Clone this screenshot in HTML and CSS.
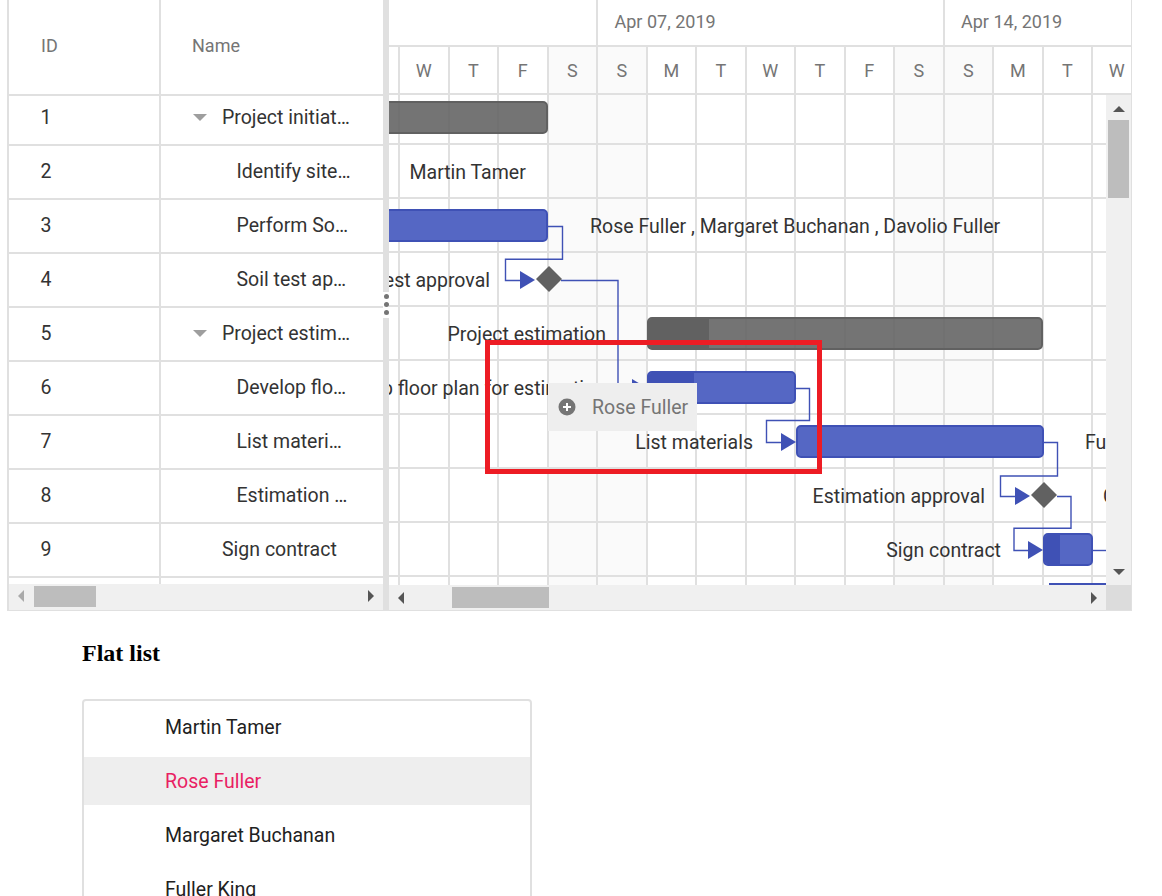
FILE: index.html
```html
<!DOCTYPE html>
<html lang="en">
<head>
    <meta charset="UTF-8">
    <title>Gantt and flat list</title>
    <link rel="stylesheet" href="styles.css">
</head>
<body>
<div class="page">

    <div class="gantt">
        <div class="grid-pane">
            <div class="grid-head">
                <div class="col-id">ID</div>
                <div class="col-name">Name</div>
            </div>
            <div class="grid-rows">
                <div class="grid-row first">
                    <div class="col-id">1</div>
                    <div class="col-name"><span class="expander"></span><span class="cell-text">Project initiation</span></div>
                </div>
                <div class="grid-row">
                    <div class="col-id">2</div>
                    <div class="col-name child"><span class="cell-text">Identify site location</span></div>
                </div>
                <div class="grid-row">
                    <div class="col-id">3</div>
                    <div class="col-name child"><span class="cell-text">Perform Soil test</span></div>
                </div>
                <div class="grid-row">
                    <div class="col-id">4</div>
                    <div class="col-name child"><span class="cell-text">Soil test approval</span></div>
                </div>
                <div class="grid-row">
                    <div class="col-id">5</div>
                    <div class="col-name"><span class="expander"></span><span class="cell-text">Project estimation</span></div>
                </div>
                <div class="grid-row">
                    <div class="col-id">6</div>
                    <div class="col-name child"><span class="cell-text">Develop floor plan for estimation</span></div>
                </div>
                <div class="grid-row">
                    <div class="col-id">7</div>
                    <div class="col-name child"><span class="cell-text">List materials</span></div>
                </div>
                <div class="grid-row">
                    <div class="col-id">8</div>
                    <div class="col-name child"><span class="cell-text">Estimation approval</span></div>
                </div>
                <div class="grid-row">
                    <div class="col-id">9</div>
                    <div class="col-name leaf"><span class="cell-text">Sign contract</span></div>
                </div>
                <div class="grid-row">
                    <div class="col-id"></div>
                    <div class="col-name"></div>
                </div>
            </div>
            <div class="hbar hbar-left">
                <span class="arrow-left disabled"></span>
                <div class="thumb"></div>
                <span class="arrow-right"></span>
            </div>
        </div>

        <div class="splitter">
            <div class="splitter-line top"></div>
            <div class="splitter-dots"><i></i><i></i><i></i></div>
            <div class="splitter-line"></div>
        </div>

        <div class="chart-pane">
            <div class="time-head">
                <div class="tier-weeks">
                    <div class="week week-a"></div>
                    <div class="week week-b">Apr 07, 2019</div>
                    <div class="week week-c">Apr 14, 2019</div>
                </div>
                <div class="tier-days">
                    <div class="day stub"></div>
                    <div class="day">W</div>
                    <div class="day">T</div>
                    <div class="day">F</div>
                    <div class="day off">S</div>
                    <div class="day off">S</div>
                    <div class="day">M</div>
                    <div class="day">T</div>
                    <div class="day">W</div>
                    <div class="day">T</div>
                    <div class="day">F</div>
                    <div class="day off">S</div>
                    <div class="day off">S</div>
                    <div class="day">M</div>
                    <div class="day">T</div>
                    <div class="day">W</div>
                </div>
            </div>

            <div class="chart-mid">
                <div class="timeline">
                    <div class="col-lines">
                        <div class="vcol stub"></div>
                        <div class="vcol"></div>
                        <div class="vcol"></div>
                        <div class="vcol"></div>
                        <div class="vcol off"></div>
                        <div class="vcol off"></div>
                        <div class="vcol"></div>
                        <div class="vcol"></div>
                        <div class="vcol"></div>
                        <div class="vcol"></div>
                        <div class="vcol"></div>
                        <div class="vcol off"></div>
                        <div class="vcol off"></div>
                        <div class="vcol"></div>
                        <div class="vcol"></div>
                        <div class="vcol"></div>
                    </div>
                    <div class="row-lines">
                        <div class="hrow first"></div>
                        <div class="hrow"></div>
                        <div class="hrow"></div>
                        <div class="hrow"></div>
                        <div class="hrow"></div>
                        <div class="hrow"></div>
                        <div class="hrow"></div>
                        <div class="hrow"></div>
                        <div class="hrow"></div>
                    </div>

                    <div class="bar summary bar-1"></div>
                    <div class="bar task bar-3"></div>
                    <div class="bar summary bar-5"><div class="progress"></div></div>
                    <div class="bar task bar-6"><div class="progress"></div></div>
                    <div class="bar task bar-7"></div>
                    <div class="bar task bar-9"><div class="progress"></div></div>

                    <span class="label label-2">Martin Tamer</span>
                    <span class="label label-3">Rose Fuller , Margaret Buchanan , Davolio Fuller</span>
                    <span class="label label-4">Soil test approval</span>
                    <span class="label label-5">Project estimation</span>
                    <span class="label label-6">Develop floor plan for estimation</span>
                    <span class="label label-7">List materials</span>
                    <span class="label label-7b">Fuller King</span>
                    <span class="label label-8">Estimation approval</span>
                    <span class="label label-8b">C</span>
                    <span class="label label-9">Sign contract</span>

                    <svg class="links" width="717" height="490" viewBox="0 0 717 490">
                        <g transform="translate(-389 -95)">
                            <path d="M548 226.5H562.5V259.3H505.5V280.5H520"/>
                            <path d="M561 280.5H618V388H632"/>
                            <path d="M796 388.5H809.5V420.5H766.5V442.5H781"/>
                            <path d="M1044 442.5H1057.5V476H1000.5V496.5H1015"/>
                            <path d="M1057 496.5H1071V528.3H1014V550.5H1028"/>
                            <path d="M1093 550.5H1106"/>
                            <path class="thick" d="M1049 584H1106"/>
                            <polygon points="520,271 535,280 520,289"/>
                            <polygon points="632,379 647,388 632,397"/>
                            <polygon points="781,433 796,442 781,451"/>
                            <polygon points="1015,487 1030,496 1015,505"/>
                            <polygon points="1028,541 1043,550 1028,559"/>
                            <polygon class="milestone" points="549,266 562,279 549,292 536,279"/>
                            <polygon class="milestone" points="1044,482 1057,495 1044,508 1031,495"/>
                        </g>
                    </svg>
                </div>
                <div class="vbar">
                    <span class="arrow-up"></span>
                    <div class="vthumb"></div>
                    <span class="arrow-down"></span>
                </div>
            </div>

            <div class="hbar-row">
                <div class="hbar hbar-chart">
                    <span class="arrow-left"></span>
                    <div class="thumb"></div>
                    <span class="arrow-right"></span>
                </div>
                <div class="corner"></div>
            </div>
        </div>

        <div class="drag-tip">
            <svg class="tip-icon" width="18" height="18" viewBox="0 0 18 18">
                <circle cx="9" cy="9" r="8.5" fill="#757575"/>
                <path d="M9 5v8M5 9h8" stroke="#fff" stroke-width="2"/>
            </svg>
            <span>Rose Fuller</span>
        </div>
        <div class="red-box"></div>
    </div>

    <h2 class="list-title">Flat list</h2>
    <ul class="flat-list">
        <li>Martin Tamer</li>
        <li class="selected">Rose Fuller</li>
        <li>Margaret Buchanan</li>
        <li>Fuller King</li>
    </ul>

</div>
</body>
</html>
```

FILE: styles.css
```css
html, body {
    margin: 0;
    padding: 0;
    background: #fff;
}

.page {
    height: 896px;
    overflow: hidden;
}

.gantt {
    position: relative;
    display: flex;
    box-sizing: border-box;
    width: 1125px;
    height: 611px;
    margin-left: 7px;
    border-left: 2px solid #e0e0e0;
    border-bottom: 1px solid #e0e0e0;
    border-right: 1px solid #e0e0e0;
    font-family: Roboto, sans-serif;
    font-size: 19.5px;
    color: #333;
}

/* left grid */
.grid-pane {
    display: flex;
    flex-direction: column;
    width: 374px;
    height: 610px;
}

.grid-head {
    display: flex;
    flex: none;
    box-sizing: border-box;
    height: 96px;
    border-bottom: 2px solid #e0e0e0;
    color: #757575;
    font-size: 18px;
}

.grid-head .col-id, .grid-head .col-name {
    padding-bottom: 4px;
}

.grid-rows {
    flex: 1;
    overflow: hidden;
}

.grid-row {
    display: flex;
    box-sizing: border-box;
    height: 54px;
    border-bottom: 2px solid #e0e0e0;
}

.grid-row.first {
    height: 50px;
}

.col-id, .col-name {
    display: flex;
    align-items: center;
    box-sizing: border-box;
    padding-bottom: 2px;
}

.col-id {
    flex: none;
    width: 152px;
    padding-left: 32px;
    border-right: 2px solid #e0e0e0;
}

.grid-row .col-id {
    padding-left: 31.5px;
}

.col-name {
    flex: 1;
    min-width: 0;
    padding-left: 31px;
    padding-right: 31px;
}

.grid-row.first .col-id, .grid-row.first .col-name {
    padding-bottom: 6px;
}

.col-name.child {
    padding-left: 75.5px;
}

.col-name.leaf {
    padding-left: 61px;
}

.cell-text {
    overflow: hidden;
    white-space: nowrap;
    text-overflow: ellipsis;
}

.expander {
    flex: none;
    width: 0;
    height: 0;
    margin: 0 15px 0 1px;
    border-top: 7px solid #9e9e9e;
    border-left: 7px solid transparent;
    border-right: 7px solid transparent;
}

/* scrollbars */
.hbar {
    display: flex;
    align-items: center;
    flex: none;
    background: #f0f0f0;
}

.hbar-left {
    box-sizing: border-box;
    height: 26px;
    padding: 0 9px 2px;
}

.hbar-left .thumb {
    width: 62px;
    margin-left: 10px;
}

.hbar-chart {
    flex: 1;
    height: 25px;
    padding: 0 9px;
}

.hbar-chart .thumb {
    width: 97px;
    margin-left: 48px;
}

.thumb {
    height: 21px;
    background: #bdbdbd;
}

.arrow-left, .arrow-right {
    width: 0;
    height: 0;
    border-top: 6px solid transparent;
    border-bottom: 6px solid transparent;
}

.arrow-left {
    border-right: 6px solid #555;
}

.arrow-left.disabled {
    border-right-color: #aaa;
}

.arrow-right {
    margin-left: auto;
    border-left: 6px solid #555;
}

.vbar {
    display: flex;
    flex-direction: column;
    align-items: center;
    flex: none;
    width: 25px;
    background: #f0f0f0;
}

.vthumb {
    width: 21px;
    height: 78px;
    margin-top: 8px;
    background: #bdbdbd;
}

.arrow-up, .arrow-down {
    width: 0;
    height: 0;
    border-left: 6px solid transparent;
    border-right: 6px solid transparent;
}

.arrow-up {
    margin-top: 11px;
    border-bottom: 6px solid #555;
}

.arrow-down {
    margin-top: auto;
    margin-bottom: 10px;
    border-top: 6px solid #555;
}

.corner {
    flex: none;
    width: 25px;
    background: #dcdcdc;
}

.hbar-row {
    display: flex;
    flex: none;
    height: 25px;
}

/* splitter */
.splitter {
    display: flex;
    flex-direction: column;
    align-items: center;
    flex: none;
    width: 6px;
    height: 610px;
}

.splitter-line {
    flex: 1;
    width: 6px;
    background: #e0e0e0;
}

.splitter-line.top {
    flex: none;
    height: 292px;
}

.splitter-dots {
    display: flex;
    flex-direction: column;
    align-items: center;
    gap: 3px;
    flex: none;
    width: 6px;
    height: 26px;
    padding-top: 2px;
    box-sizing: border-box;
    background: #fff;
}

.splitter-dots i {
    width: 5px;
    height: 5px;
    border-radius: 50%;
    background: #757575;
}

/* chart */
.chart-pane {
    display: flex;
    flex-direction: column;
    flex: 1;
    min-width: 0;
    height: 610px;
}

.time-head {
    flex: none;
    height: 95px;
    overflow: hidden;
    color: #757575;
    font-size: 18px;
}

.tier-weeks {
    display: flex;
    box-sizing: border-box;
    height: 47px;
    border-bottom: 2px solid #e0e0e0;
}

.week {
    display: flex;
    align-items: center;
    flex: none;
    box-sizing: border-box;
    padding-left: 16.5px;
    padding-bottom: 2px;
    border-right: 2px solid #e0e0e0;
}

.week-a {
    width: 209px;
}

.week-b {
    width: 346.5px;
}

.week-c {
    width: 300px;
    border-right: 0;
}

.tier-days {
    display: flex;
    box-sizing: border-box;
    height: 48px;
    border-bottom: 2px solid #e0e0e0;
}

.day {
    display: flex;
    align-items: center;
    justify-content: center;
    flex: none;
    box-sizing: border-box;
    width: 49.5px;
    border-right: 2px solid #e0e0e0;
}

.day.stub, .vcol.stub {
    width: 11px;
}

.day.off, .vcol.off {
    background: #fafafa;
}

.chart-mid {
    display: flex;
    flex: none;
    height: 490px;
}

.timeline {
    position: relative;
    flex: 1;
    overflow: hidden;
}

.col-lines {
    position: absolute;
    top: 0;
    bottom: 0;
    left: 0;
    display: flex;
}

.vcol {
    flex: none;
    box-sizing: border-box;
    width: 49.5px;
    border-right: 2px solid #e0e0e0;
}

.row-lines {
    position: absolute;
    top: 0;
    left: 0;
    right: 0;
}

.hrow {
    box-sizing: border-box;
    height: 54px;
    border-bottom: 2px solid #e0e0e0;
}

.hrow.first {
    height: 50px;
}

/* bars */
.bar {
    position: absolute;
    box-sizing: border-box;
    height: 33px;
    overflow: hidden;
    border: 2px solid;
    border-radius: 5px;
}

.bar.summary {
    border-color: #616161;
    background: rgba(97, 97, 97, 0.88);
}

.bar.task {
    border-color: #3f51b5;
    background: #5567c4;
}

.progress {
    height: 100%;
}

.summary .progress {
    background: #616161;
}

.task .progress {
    background: #3f51b5;
}

.bar-1 {
    left: -20px;
    top: 6px;
    width: 179px;
}

.bar-3 {
    left: -20px;
    top: 114px;
    width: 179px;
}

.bar-5 {
    left: 258px;
    top: 222px;
    width: 396px;
}

.bar-5 .progress {
    width: 60px;
}

.bar-6 {
    left: 258px;
    top: 276px;
    width: 149px;
}

.bar-6 .progress {
    width: 45px;
}

.bar-7 {
    left: 407px;
    top: 330px;
    width: 248px;
}

.bar-9 {
    left: 654px;
    top: 438px;
    width: 50px;
}

.bar-9 .progress {
    width: 15px;
}

.label {
    position: absolute;
    line-height: 24px;
    white-space: nowrap;
}

.label-2 { left: 20.5px; top: 66px; }
.label-3 { left: 201px; top: 120px; }
.label-4 { right: 616px; top: 174px; }
.label-5 { right: 500px; top: 228px; }
.label-6 { right: 500px; top: 282px; }
.label-7 { right: 353px; top: 336px; }
.label-7b { left: 696px; top: 336px; }
.label-8 { right: 121px; top: 390px; }
.label-8b { left: 714px; top: 390px; }
.label-9 { right: 105px; top: 444px; }

.links {
    position: absolute;
    top: 0;
    left: 0;
}

.links path {
    fill: none;
    stroke: #3f51b5;
    stroke-width: 1.4;
}

.links path.thick {
    stroke-width: 2;
}

.links polygon {
    fill: #3f51b5;
}

.links polygon.milestone {
    fill: #616161;
}

/* overlays */
.drag-tip {
    position: absolute;
    left: 539px;
    top: 383px;
    display: flex;
    align-items: center;
    box-sizing: border-box;
    width: 149px;
    height: 48px;
    padding-left: 10px;
    background: #eee;
    color: #757575;
}

.tip-icon {
    margin-right: 16px;
}

.red-box {
    position: absolute;
    left: 476px;
    top: 340px;
    box-sizing: border-box;
    width: 337px;
    height: 134px;
    border: 5px solid #ed1c24;
}

/* flat list */
.list-title {
    margin: 27px 0 0 82px;
    height: 61px;
    font-family: "Liberation Serif", serif;
    font-size: 24px;
    line-height: 30px;
    color: #000;
}

.flat-list {
    box-sizing: border-box;
    width: 450px;
    margin: 0 0 0 82px;
    padding: 2px 0 0;
    list-style: none;
    border: 2px solid #e0e0e0;
    border-radius: 4px;
    font-family: Roboto, sans-serif;
    font-size: 19.5px;
    color: #212121;
}

.flat-list li {
    height: 48px;
    margin-bottom: 6px;
    padding-left: 81px;
    line-height: 50px;
}

.flat-list li.selected {
    background: #eee;
    color: #e91e63;
}
```
